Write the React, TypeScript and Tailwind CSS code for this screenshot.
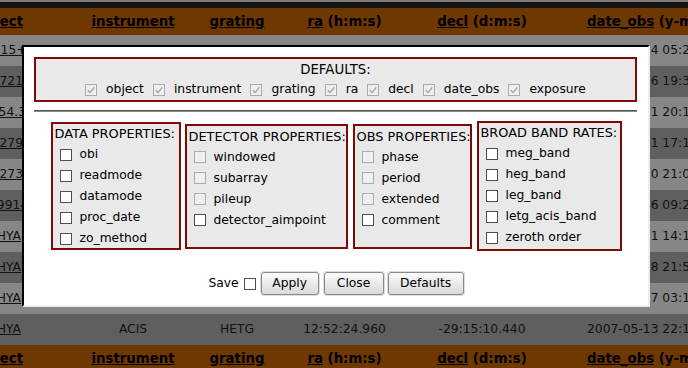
import React from "react";

type Kind = "on" | "off" | "dim" | "dimOn";

// checkbox drawn by hand so it looks like the old gtk one
function Check({ kind }: { kind: Kind }) {
  const dim = kind === "dim" || kind === "dimOn";
  return (
    <span
      className={`relative inline-block w-[12px] h-[12px] shrink-0 border ${
        dim ? "border-[#ababab] bg-[#efefef]" : "border-[#4f4f4f] bg-white"
      }`}
    >
      {kind === "dimOn" && (
        <svg viewBox="0 0 10 10" className="absolute inset-0 w-[10px] h-[10px]">
          <path d="M1.8 5.2 L4.1 7.6 L8.3 2.3" fill="none" stroke="#a0a0a0" strokeWidth="1.3" />
        </svg>
      )}
    </span>
  );
}

type Row = {
  obj: string;
  pr: string;
  inst: string;
  grat: string;
  ra: string;
  decl: string;
  date: string;
};

const rows: Row[] = [
  { obj: "PG 1115+080", pr: "pr-[33px]", inst: "ACIS", grat: "HETG", ra: "11:18:17.000", decl: "+07:45:57.000", date: "2007-05-14 05:26:31" },
  { obj: "Mrk 721", pr: "pr-[60px]", inst: "ACIS", grat: "HETG", ra: "10:34:12.300", decl: "+38:12:10.000", date: "2007-05-06 19:31:02" },
  { obj: "RX J1154.3", pr: "pr-[57px]", inst: "ACIS", grat: "LETG", ra: "11:54:18.700", decl: "-29:15:03.000", date: "2007-05-11 20:14:55" },
  { obj: "3C 279", pr: "pr-[60px]", inst: "ACIS", grat: "HETG", ra: "12:56:11.170", decl: "-05:47:21.500", date: "2007-05-11 17:12:40" },
  { obj: "3C 273", pr: "pr-[60px]", inst: "ACIS", grat: "HETG", ra: "12:29:06.700", decl: "+02:03:08.600", date: "2007-05-10 21:03:18" },
  { obj: "HD 199143", pr: "pr-[47px]", inst: "ACIS", grat: "HETG", ra: "20:55:47.670", decl: "-17:06:51.000", date: "2007-04-26 09:25:47" },
  { obj: "TW HYA", pr: "pr-[62px]", inst: "ACIS", grat: "HETG", ra: "11:01:51.910", decl: "-34:42:17.000", date: "2007-04-21 14:12:09" },
  { obj: "TW HYA", pr: "pr-[62px]", inst: "ACIS", grat: "HETG", ra: "11:01:51.910", decl: "-34:42:17.000", date: "2007-04-18 21:54:30" },
  { obj: "TW HYA", pr: "pr-[62px]", inst: "ACIS", grat: "HETG", ra: "11:01:51.910", decl: "-34:42:17.000", date: "2007-04-17 03:17:44" },
  { obj: "TW HYA", pr: "pr-[62px]", inst: "ACIS", grat: "HETG", ra: "12:52:24.960", decl: "-29:15:10.440", date: "2007-05-13 22:16:21" },
];

const cols = "grid grid-cols-[83px_100px_108px_107px_168px_1fr] items-center whitespace-nowrap";

function HeaderRow() {
  return (
    <div className={`${cols} h-[27px] bg-[#6f3800] font-bold text-[13.3px] text-black`}>
      <div className="flex justify-end pr-[60px]">
        <span className="underline">object</span>
      </div>
      <div className="text-center underline">instrument</div>
      <div className="text-center underline">grating</div>
      <div className="text-center">
        <span className="underline">ra</span> (h:m:s)
      </div>
      <div className="text-center">
        <span className="underline">decl</span> (d:m:s)
      </div>
      <div className="pl-[21px]">
        <span className="underline">date_obs</span> (y-m-d h:m:s)
      </div>
    </div>
  );
}

const defaults = ["object", "instrument", "grating", "ra", "decl", "date_obs", "exposure"];

type Group = {
  title: string;
  box: string;
  items: { label: string; kind: Kind }[];
};

const groups: Group[] = [
  {
    title: "DATA PROPERTIES:",
    box: "w-[130px] h-[128px] pt-0",
    items: [
      { label: "obi", kind: "on" },
      { label: "readmode", kind: "on" },
      { label: "datamode", kind: "on" },
      { label: "proc_date", kind: "on" },
      { label: "zo_method", kind: "on" },
    ],
  },
  {
    title: "DETECTOR PROPERTIES:",
    box: "w-[163px] h-[125px] pt-[1px]",
    items: [
      { label: "windowed", kind: "dim" },
      { label: "subarray", kind: "dim" },
      { label: "pileup", kind: "dim" },
      { label: "detector_aimpoint", kind: "on" },
    ],
  },
  {
    title: "OBS PROPERTIES:",
    box: "w-[119px] h-[125px] pt-[1px]",
    items: [
      { label: "phase", kind: "dim" },
      { label: "period", kind: "dim" },
      { label: "extended", kind: "dim" },
      { label: "comment", kind: "on" },
    ],
  },
  {
    title: "BROAD BAND RATES:",
    box: "w-[145px] h-[130px] pt-0",
    items: [
      { label: "meg_band", kind: "on" },
      { label: "heg_band", kind: "on" },
      { label: "leg_band", kind: "on" },
      { label: "letg_acis_band", kind: "on" },
      { label: "zeroth order", kind: "on" },
    ],
  },
];

function Btn({ label, w }: { label: string; w: string }) {
  return (
    <button
      type="button"
      className={`${w} h-[23px] rounded-[3px] border border-[#8a8a8a] bg-linear-to-b from-[#fbfbfb] to-[#dadada] shadow-[0_0_0_1px_#dcdcdc] text-[12.3px] text-black leading-none`}
    >
      {label}
    </button>
  );
}

export default function App() {
  return (
    <div className="relative w-[688px] h-[368px] overflow-hidden bg-[#858585] text-[12.3px] text-[#111] font-['DejaVu_Sans',sans-serif]">
      <div className="h-[2px] bg-[#7c7c7c]" />
      <div className="h-[6px] bg-[#131313]" />
      <HeaderRow />
      {rows.map((r, i) => (
        <div key={i} className={`${cols} h-[31px] ${i % 2 === 0 ? "bg-[#868686]" : "bg-[#5f5f5f]"}`}>
          <div className={`flex justify-end ${r.pr}`}>
            <span className="underline">{r.obj}</span>
          </div>
          <div className="text-center">{r.inst}</div>
          <div className="text-center">{r.grat}</div>
          <div className="text-center">{r.ra}</div>
          <div className="text-center">{r.decl}</div>
          <div className="pl-[21px]">{r.date}</div>
        </div>
      ))}
      <HeaderRow />

      {/* column chooser dialog */}
      <div className="absolute left-[22px] top-[45px] w-[628px] h-[262px] bg-white border-2 border-t-black border-l-black border-r-[#ededed] border-b-[#ededed] px-[10px] pt-[10px] text-black">
        <div className="w-[603px] h-[45px] border-2 border-[#7e0a03] bg-[#e9e9e9] flex flex-col items-center pt-[3px]">
          <div className="leading-[16px] text-[13.3px]">DEFAULTS:</div>
          <div className="mt-[2px] h-[19px] flex items-center gap-[9px]">
            {defaults.map((d) => (
              <div key={d} className="flex items-center">
                <Check kind="dimOn" />
                <span className="ml-[9px]">{d}</span>
              </div>
            ))}
          </div>
        </div>

        <div className="mt-[8px] w-[603px] h-[2px] border-t border-[#555] bg-[#8a8a8a]" />

        <div className="mt-[9px] h-[130px] flex items-center justify-center gap-[5px]">
          {groups.map((g, gi) => (
            <div
              key={g.title}
              className={`${g.box} ${gi === 0 ? "-mr-[1px]" : ""} border-2 border-[#7e0a03] bg-[#e9e9e9] pl-[2px] whitespace-nowrap`}
            >
              <div className="leading-[20px] text-[12.9px]">{g.title}</div>
              {g.items.map((it) => (
                <div key={it.label} className="h-[21px] flex items-center">
                  <span className="ml-[5px] flex">
                    <Check kind={it.kind} />
                  </span>
                  <span className="ml-[8px]">{it.label}</span>
                </div>
              ))}
            </div>
          ))}
        </div>

        <div className="mt-[21px] h-[23px] flex items-center justify-center">
          <span>Save</span>
          <span className="ml-[5px] mr-[5px] flex">
            <Check kind="on" />
          </span>
          <Btn label="Apply" w="w-[58px]" />
          <span className="w-[5px]" />
          <Btn label="Close" w="w-[60px]" />
          <span className="w-[4px]" />
          <Btn label="Defaults" w="w-[76px]" />
        </div>
      </div>
    </div>
  );
}
